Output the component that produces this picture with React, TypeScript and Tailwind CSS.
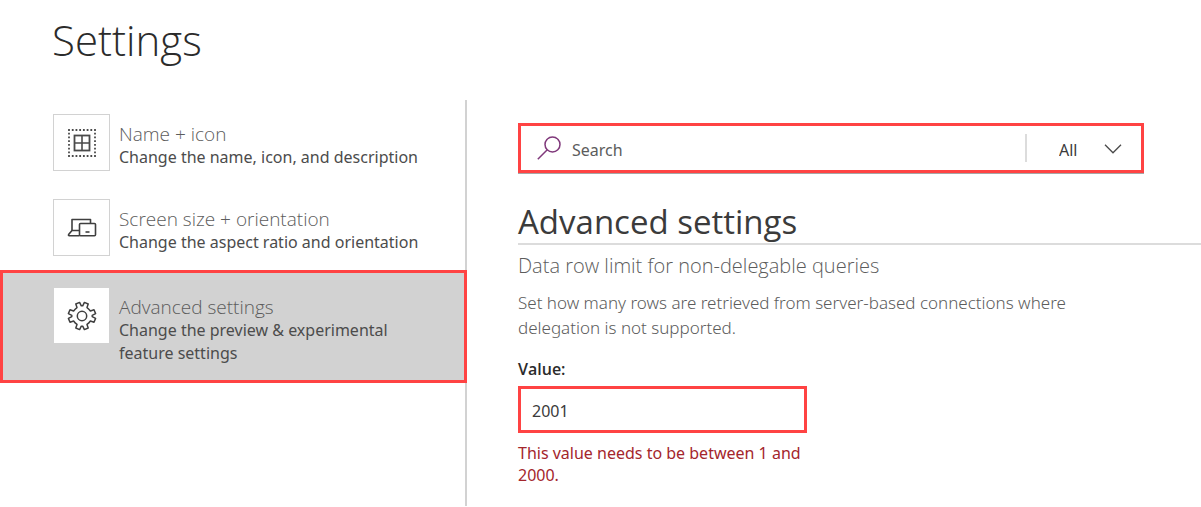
import React, { useState } from "react";

type Item = { title: string; text: string; icon: React.ReactNode };

function NameIcon() {
  return (
    <svg width="30" height="30" viewBox="0 0 30 30" fill="none" stroke="#4a4a4a">
      <rect x="2" y="2" width="26" height="26" strokeWidth="1.8" strokeDasharray="1.8 1.914" strokeDashoffset="0.9" />
      <rect x="7.5" y="7.5" width="15" height="15" strokeWidth="1.8" />
      <path d="M15 7.5v15M7.5 15h15" strokeWidth="1.6" />
    </svg>
  );
}

function ScreensIcon() {
  return (
    <svg width="30" height="30" viewBox="0 0 30 30" fill="none" stroke="#3f3f3f" strokeWidth="1.6" strokeLinejoin="round">
      <path d="M5 17.5V6.5h18.5v4" />
      <path d="M12.5 17.5H5L1.6 21.6c-.4.6 0 1.2.6 1.2h10.3" />
      <rect x="12.5" y="10.5" width="16" height="12.3" rx="1" />
      <path d="M18.5 19h4" />
    </svg>
  );
}

function GearIcon() {
  return (
    <svg width="30" height="30" viewBox="-15 -15 30 30" fill="none" stroke="#3f3f3f" strokeWidth="1.5" strokeLinejoin="round">
      <path d="M10.2 .7L13.6 2.4L12 6.2L8.4 5Q7 7 5 8.4L6.2 12L2.4 13.6L.7 10.2Q0 10.3-.7 10.2L-2.4 13.6L-6.2 12L-5 8.4Q-7 7-8.4 5L-12 6.2L-13.6 2.4L-10.2 .7Q-10.3 0-10.2-.7L-13.6-2.4L-12-6.2L-8.4-5Q-7-7-5-8.4L-6.2-12L-2.4-13.6L-.7-10.2Q0-10.3 .7-10.2L2.4-13.6L6.2-12L5-8.4Q7-7 8.4-5L12-6.2L13.6-2.4L10.2-.7Q10.3 0 10.2 .7Z" />
      <circle r="4.7" />
    </svg>
  );
}

const items: Item[] = [
  { title: "Name + icon", text: "Change the name, icon, and description", icon: <NameIcon /> },
  { title: "Screen size + orientation", text: "Change the aspect ratio and orientation", icon: <ScreensIcon /> },
  { title: "Advanced settings", text: "Change the preview & experimental feature settings", icon: <GearIcon /> },
];

export default function App() {
  const [active, setActive] = useState(2);
  const [value, setValue] = useState("2001");
  return (
    <div className="flex min-h-screen flex-col bg-white pb-px font-['Noto_Sans','Open_Sans',sans-serif] text-[#3b3b3b]">
      <header className="px-[52px] pt-3 pb-8">
        <h1 className="font-['Open_Sans','Noto_Sans',sans-serif] text-[42px] leading-[56px] font-light text-[#2b2b2b]">Settings</h1>
      </header>
      <div className="flex grow">
        <nav className="w-[467px] shrink-0 border-r-2 border-[#d2d2d2]">
          {items.map((item, i) => (
            <button
              key={item.title}
              type="button"
              onClick={() => setActive(i)}
              className={
                i === active
                  ? "-mr-0.5 flex w-[467px] gap-[9px] border-3 border-[#ff4343] bg-[#d2d2d2] pt-[14px] pr-12 pb-[15px] pl-[50px] text-left"
                  : "flex w-full gap-[9px] py-[14px] pl-[53px] text-left"
              }
            >
              <span className="flex size-[57px] shrink-0 items-center justify-center border border-[#d2d2d2] bg-white">
                {item.icon}
              </span>
              <span className="flex flex-col pt-2">
                <span className="font-['Open_Sans','Noto_Sans',sans-serif] text-[19px] leading-6 font-light text-[#5c5c5c]">{item.title}</span>
                <span className="text-[16px] leading-[23px] text-[#4c4c4c]">{item.text}</span>
              </span>
            </button>
          ))}
        </nav>
        <main className="min-w-0 grow pt-[23px] pl-[51px]">
          <div className="mr-[57px] flex h-[50px] items-center border-3 border-[#ff4343] shadow-[0_1px_0_0_#a6a6a6]">
            <svg className="ml-4 shrink-0" width="26" height="26" viewBox="0 0 26 26" fill="none" stroke="#80397b" strokeWidth="1.5">
              <circle cx="15.5" cy="9.5" r="7.5" />
              <path d="M10.3 14.8L.8 24.2" />
            </svg>
            <input
              type="search"
              aria-label="Search"
              placeholder="Search"
              className="ml-[9px] min-w-0 grow bg-transparent pt-1 text-[16px] outline-none placeholder:text-[#5c5c5c]"
            />
            <div className="relative flex h-7 w-[116px] shrink-0 items-center border-l-2 border-[#dcdcdc]">
              <select aria-label="Filter" className="w-full appearance-none bg-transparent pt-1 pl-8 text-[16px] outline-none">
                <option>All</option>
              </select>
              <svg className="pointer-events-none absolute top-[10px] right-[19px]" width="18" height="10" viewBox="0 0 18 10" fill="none" stroke="#4a4a4a" strokeWidth="1.3">
                <path d="M1 .8l8 8 8-8" />
              </svg>
            </div>
          </div>
          <h2 className="mt-7 border-b-2 border-[#dcdcdc] font-['Open_Sans','Noto_Sans',sans-serif] text-[33px] leading-[42px] text-[#3b3b3b]">Advanced settings</h2>
          <h3 className="mt-[7px] font-['Open_Sans','Noto_Sans',sans-serif] text-[20px] leading-7 font-light text-[#5c5c5c]">Data row limit for non-delegable queries</h3>
          <p className="mt-2.5 max-w-[600px] text-[17px] leading-[25px] font-light text-[#5c5c5c]">
            Set how many rows are retrieved from server-based connections where delegation is not supported.
          </p>
          <div className="mt-[17px] w-[289px]">
            <label htmlFor="row-limit" className="block font-['Open_Sans','Noto_Sans',sans-serif] text-[16px] leading-6 font-semibold text-[#2b2b2b]">
              Value:
            </label>
            <input
              id="row-limit"
              type="text"
              inputMode="numeric"
              aria-describedby="row-limit-error"
              aria-invalid="true"
              value={value}
              onChange={(e) => setValue(e.target.value)}
              className="mt-[5px] block h-[47px] w-full border-3 border-[#ff4343] px-[11px] pt-0.5 text-[16px] text-[#3b3b3b] outline-none"
            />
            <p id="row-limit-error" className="mt-[9px] text-[16px] leading-[22px] text-[#a4262c]">
              This value needs to be between 1 and 2000.
            </p>
          </div>
        </main>
      </div>
    </div>
  );
}
